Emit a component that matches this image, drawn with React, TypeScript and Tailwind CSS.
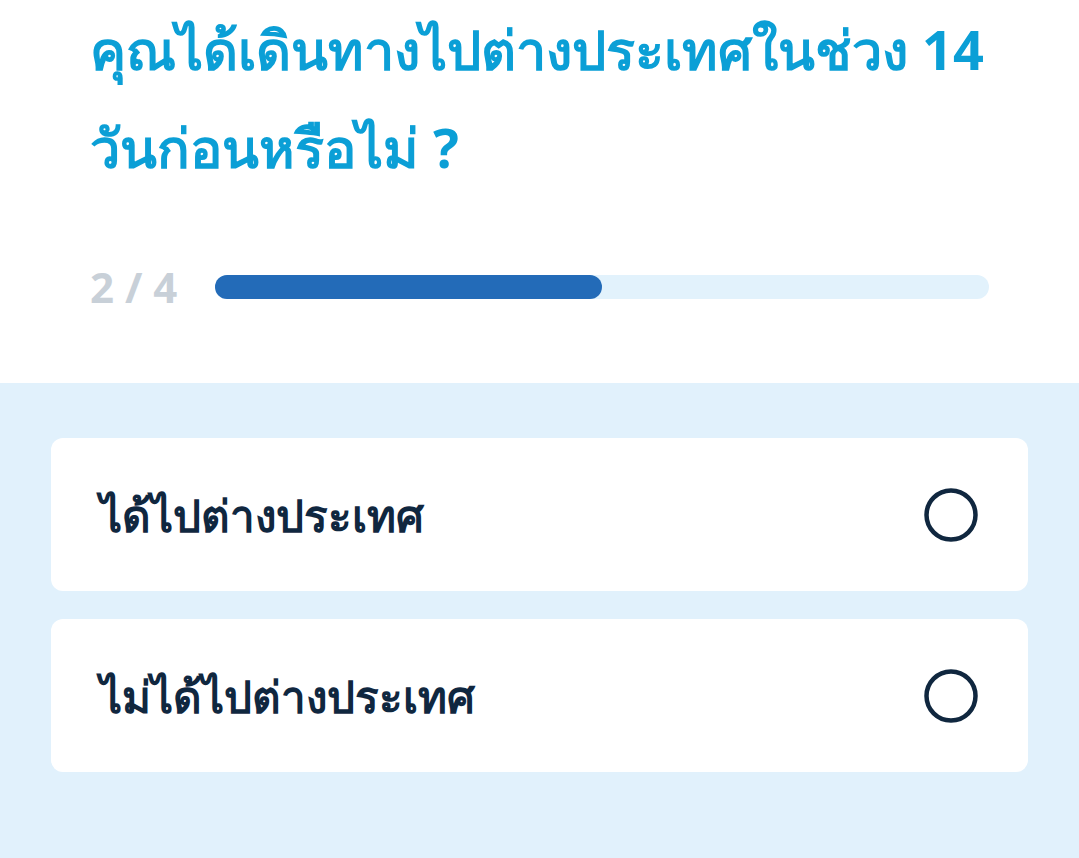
import React from 'react';

const options = ['ได้ไปต่างประเทศ', 'ไม่ได้ไปต่างประเทศ'];

const RadioCircle: React.FC = () => (
  <svg width="56" height="56" viewBox="0 0 56 56" fill="none">
    <circle cx="28" cy="28" r="24.5" stroke="#10273f" strokeWidth="4.5" />
  </svg>
);

const App: React.FC = () => {
  const step = 2;
  const total = 4;

  return (
    <div className="min-h-[858px] w-full bg-[#e1f1fc] font-['Noto_Sans','Liberation_Sans',sans-serif]">
      {/* question */}
      <div className="bg-white px-[90px] pb-[76px]">
        <h1 className="text-[54px] font-bold leading-[98px] text-[#0b9fd6]">
          คุณได้เดินทางไปต่างประเทศในช่วง 14 วันก่อนหรือไม่ ?
        </h1>
        <div className="mt-[71px] flex h-[40px] items-center">
          <span className="w-[125px] shrink-0 text-[42px] font-bold leading-none text-[#c8d0d8]">
            {step} / {total}
          </span>
          <div className="h-[24px] flex-1 rounded-full bg-[#e2f2fc]">
            <div
              className="h-full rounded-full bg-[#236bb8]"
              style={{ width: `${(step / total) * 100}%` }}
            />
          </div>
        </div>
      </div>

      {/* answers */}
      <div className="flex flex-col gap-[28px] px-[51px] pt-[55px] pb-[86px]">
        {options.map((label) => (
          <button
            key={label}
            className="flex h-[153px] items-center justify-between rounded-[12px] bg-white px-[49px] text-left"
          >
            <span className="text-[44px] font-semibold text-[#10273f]">{label}</span>
            <RadioCircle />
          </button>
        ))}
      </div>
    </div>
  );
};

export default App;
